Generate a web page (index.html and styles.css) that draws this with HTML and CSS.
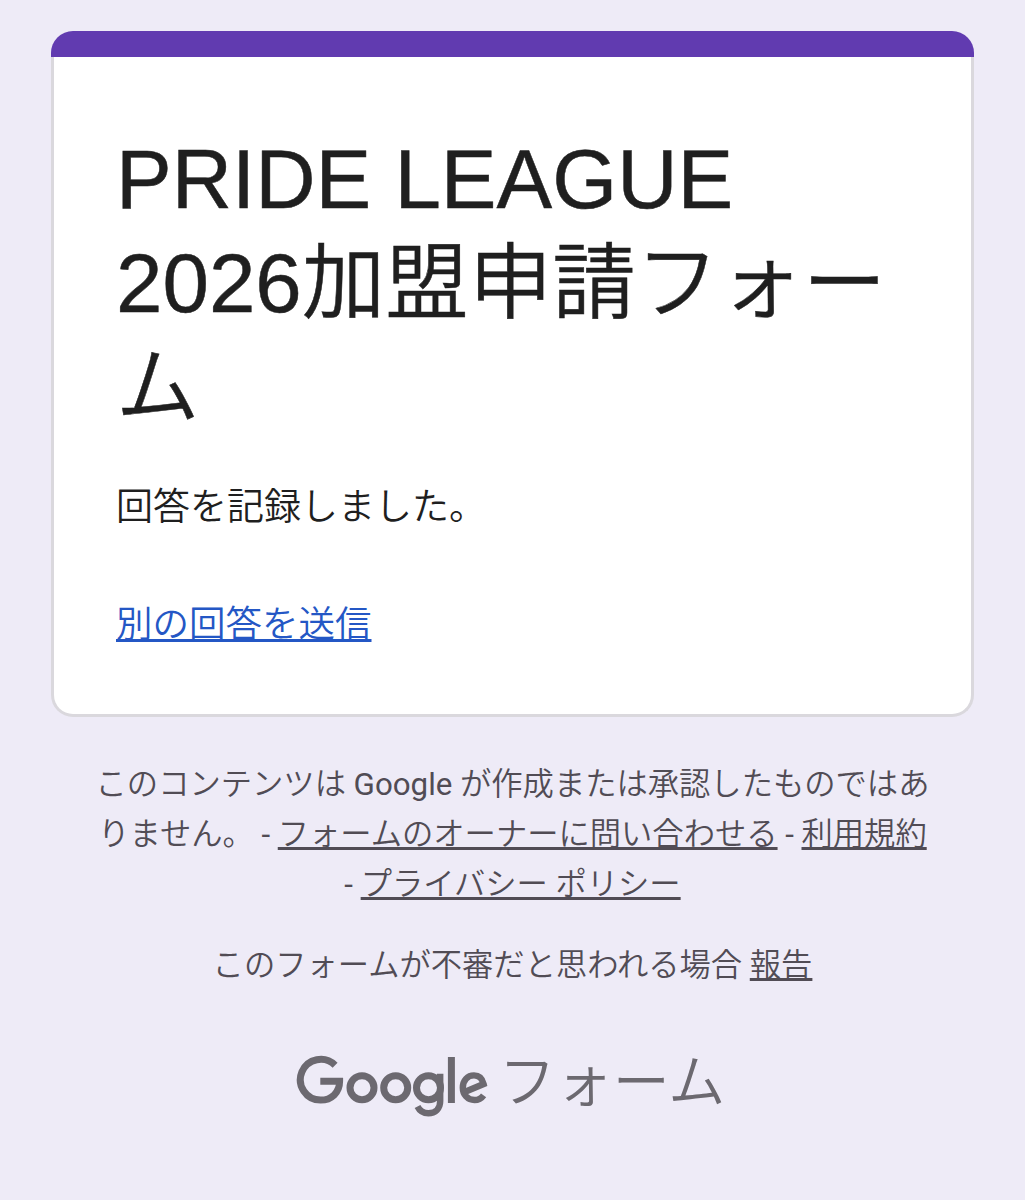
FILE: index.html
```html
<!DOCTYPE html>
<html lang="ja">
<head>
    <meta charset="UTF-8">
    <meta name="viewport" content="width=device-width, initial-scale=1.0">
    <title>PRIDE LEAGUE 2026加盟申請フォーム</title>
    <link rel="stylesheet" href="styles.css">
</head>
<body>
    <div class="card-bar"></div>
    <main class="card">
        <h1>PRIDE LEAGUE<br>2026加盟申請フォー<br>ム</h1>
        <p class="message">回答を記録しました。</p>
        <a class="again" href="#">別の回答を送信</a>
    </main>

    <footer class="footer">
        <p class="notice">
            <span class="line">このコンテンツは <span class="latin">Google</span> が作成または承認したものではあ</span>
            <span class="line">りません。 <span class="latin">-</span> <a href="#">フォームのオーナーに問い合わせる</a> <span class="latin">-</span> <a href="#">利用規約</a></span>
            <span class="line"><span class="latin">-</span> <a href="#">プライバシー ポリシー</a></span>
        </p>
        <p class="report">このフォームが不審だと思われる場合 <a href="#">報告</a></p>
        <div class="brand">
            <svg class="logo" viewBox="0 0 196 66" role="img" aria-label="Google">
                <path d="M40.1 12.2A20.4 20.4 0 1 0 25.6 47.1C36.5 47.1 44.6 39.5 44.6 28.3H25.3"/>
                <circle cx="67" cy="34.7" r="12"/>
                <circle cx="100.7" cy="34.7" r="12"/>
                <circle cx="133.5" cy="34.7" r="12"/>
                <path class="thin" d="M145.2 20.7V48C145.2 56 140 60.2 133.4 60.2C128 60.2 124.5 57.5 122.5 53.5"/>
                <path d="M156.4 4V50"/>
                <path class="thin" d="M188.6 42.3C186.3 45.5 183 47 179.5 47C172.5 47 167.8 41.5 167.8 34.7C167.8 27.5 172.5 22.4 179 22.4C184 22.4 187.3 25.5 188.6 31L169 39.2"/>
            </svg>
            <span class="brand-name">フォーム</span>
        </div>
    </footer>
</body>
</html>
```
FILE: styles.css
```css
body {
    margin: 0;
    padding: 31px 51px 0;
    background-color: #eeebf7;
    color: #1f1f1f;
    font-family: "Liberation Sans", "Noto Sans CJK JP", sans-serif;
}
.card-bar {
    height: 26px;
    background-color: #613bb0;
    border-radius: 22px 22px 0 0;
}
.card {
    box-sizing: border-box;
    height: 660px;
    padding: 70px 62px 0;
    background-color: white;
    border: 3px solid #dad8dd;
    border-top: none;
    border-radius: 0 0 22px 22px;
}
h1 {
    margin: 0;
    font-size: 83.5px;
    font-weight: 350;
    line-height: 104px;
    white-space: nowrap;
    -webkit-text-stroke: 0.5px #1f1f1f;
}
.message {
    margin: 43px 0 0;
    font-size: 37px;
    font-weight: 350;
    line-height: 52px;
}
.again {
    display: inline-block;
    margin-top: 65px;
    color: #2457c5;
    font-size: 36.5px;
    font-weight: 350;
    line-height: 52px;
}
.footer {
    color: #514c55;
    font-family: Roboto, "Noto Sans CJK JP", sans-serif;
    font-size: 31.3px;
    font-weight: 350;
    line-height: 50px;
    text-align: center;
}
.footer a {
    color: inherit;
}
.notice {
    margin: 43px 0 0;
}
.line {
    display: block;
    white-space: nowrap;
}
.latin {
    font-weight: 400;
}
.report {
    margin: 31px 0 0;
}
.brand {
    display: flex;
    justify-content: center;
    margin-top: 62px;
    padding-right: 5px;
    color: #6c6970;
}
.logo {
    width: 196px;
    height: 66px;
    fill: none;
    stroke: currentColor;
    stroke-width: 7;
}
.logo .thin {
    stroke-width: 6.4;
}
.brand-name {
    margin-left: 8px;
    font-size: 57px;
    line-height: 60px;
}
```
